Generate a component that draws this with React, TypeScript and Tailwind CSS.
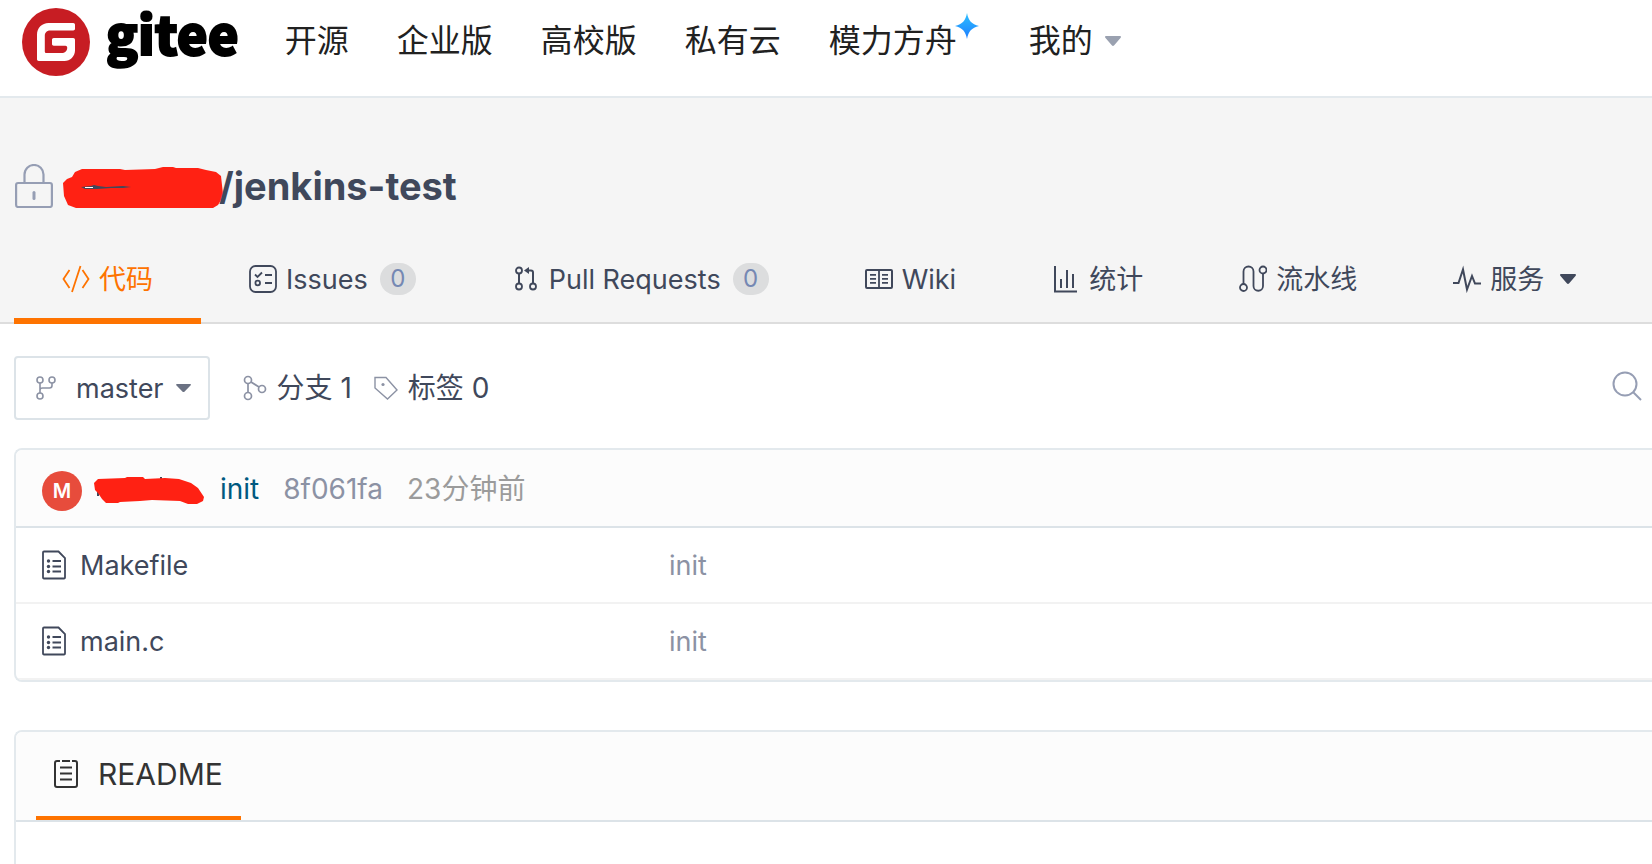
import type { ReactNode } from 'react';

const products = ['开源', '企业版', '高校版', '私有云'];

const files = [
  { name: 'Makefile', message: 'init' },
  { name: 'main.c', message: 'init' },
];

function Caret({ className }: { className: string }) {
  return (
    <svg viewBox="0 0 16 10" preserveAspectRatio="none" className={className} fill="currentColor" aria-hidden="true">
      <path d="M1.2 0h13.6c1 0 1.500.9.9 1.700L9.200 9.300c-.7.9-1.700.9-2.400 0L.3 1.700C-.3.9.2 0 1.200 0z" />
    </svg>
  );
}

function Logo() {
  return (
    <a href="#" aria-label="gitee" className="flex shrink-0 items-start gap-4">
      <svg viewBox="0 0 68 68" className="size-[68px]" aria-hidden="true">
        <circle cx="34" cy="34" r="34" fill="#c71d23" />
        <path
          fill="#fff"
          d="M51.300 15H26.500C20 15 15 20 15 26.500V51.300c0 .9.8 1.700 1.700 1.700H42.500C48.200 53 53 48.200 53 42.500V31.700c0-.9-.8-1.700-1.700-1.700H31.700c-.9 0-1.700.8-1.700 1.700V36c0 .9.8 1.700 1.700 1.700H43.500c.9 0 1.700.8 1.700 1.700v.7c0 2.800-2.300 5-5 5H24.500c-.9 0-1.700-.8-1.700-1.700V27.500c0-2.800 2.300-5 5-5H51.300c.9 0 1.700-.8 1.700-1.700V16.700c0-.9-.8-1.700-1.700-1.700z"
        />
      </svg>
      <span className="font-['Noto_Sans_CJK_SC',sans-serif] text-[52px] leading-[50px] font-black text-black [-webkit-text-stroke:2px_#000]">gitee</span>
    </a>
  );
}

function Spark() {
  return (
    <svg viewBox="0 0 24 24" preserveAspectRatio="none" className="absolute -top-2 left-full -ml-0.5 h-[26px] w-6" aria-hidden="true">
      <defs>
        <linearGradient id="spark" x1="0" y1="0" x2="0" y2="1">
          <stop offset="0" stopColor="#2ec0ff" />
          <stop offset="1" stopColor="#1e7dff" />
        </linearGradient>
      </defs>
      <path fill="url(#spark)" d="M12 0c1.500 7 4.500 10.300 12 12-7.500 1.700-10.500 5-12 12-1.500-7-4.500-10.300-12-12C7.500 10.300 10.500 7 12 0z" />
    </svg>
  );
}

function Lock() {
  return (
    <svg viewBox="0 0 38 44" className="h-11 w-[38px] shrink-0" fill="none" stroke="#969eb4" strokeWidth="2.200" aria-hidden="true">
      <rect x="1.100" y="19" width="35.800" height="24" rx="2" />
      <path d="M9.500 19V10.500a9.500 9.500 0 0 1 19 0V19" />
      <path d="M19 28.500v6" strokeWidth="3" strokeLinecap="round" />
    </svg>
  );
}

function OwnerScribble() {
  return (
    <svg viewBox="0 0 164 44" className="h-11 w-[164px] shrink-0" aria-hidden="true">
      <path fill="#40485b" d="M140 40l4 3h7l5-4z" />
      <path
        fill="#ff2113"
        d="M2 19l4-4 5-2 3-5 7-3h38l5 1 30-1 8-2h10l3 1h22l8 2 10 2 5 4 1 9 1 9-2 6-3 5-5 3H100l-40 1-12 3H20l-5-4-8-3-4-9z"
      />
      <path fill="#40485b" d="M20 23l10-1 3-1 4 1 8 1 17-1 8 1-8 1H50l-14 1H24z" />
      <path fill="#fff" d="M24 23h8v1h-8z" />
    </svg>
  );
}

function AuthorScribble() {
  return (
    <svg viewBox="0 0 110 30" className="h-[30px] w-[110px] shrink-0" aria-hidden="true">
      <path fill="#40485b" d="M3 14h2v6H3zM66 1h2v4h-2zM90 25l6 3h5v-3z" />
      <path
        fill="#ff2113"
        d="M0 7l4-4 27-1 2-1h16l2 2 20-1 14 1 12 4 7 5 4 6 2 3-1 4-6 3h-9l-8-3-28-1-12 1-20 1-2 1H12l-4-4-4-6-3-3z"
      />
    </svg>
  );
}

const lineIcon = {
  fill: 'none',
  stroke: 'currentColor',
  strokeWidth: 2,
  'aria-hidden': true,
} as const;

function CodeIcon() {
  return (
    <svg viewBox="0 0 28 28" className="size-7" {...lineIcon}>
      <path d="M7.500 5L1.500 14l6 9M20.500 5l6 9-6 9M18.500 1L10 27" strokeWidth="1.800" />
    </svg>
  );
}

function IssuesIcon() {
  return (
    <svg viewBox="0 0 28 28" className="size-7" {...lineIcon} strokeWidth={1.800}>
      <rect x="1" y="1" width="26" height="26" rx="5.500" />
      <path d="M6 9.500l2.500 2.500L13 7.500M16 10h7M16 18h7" />
      <circle cx="8.700" cy="18" r="2.300" />
    </svg>
  );
}

function PullIcon() {
  return (
    <svg viewBox="0 0 28 28" className="size-7" {...lineIcon}>
      <circle cx="7" cy="5.500" r="3" strokeWidth="1.800" />
      <circle cx="7" cy="21.500" r="3" strokeWidth="1.800" />
      <circle cx="21" cy="21.500" r="3" strokeWidth="1.800" />
      <path d="M7 8.500v10M21 18.500V7.500q0-2-2-2h-3" />
      <path d="M12 5.500l5-3.500v7z" fill="currentColor" stroke="none" />
    </svg>
  );
}

function WikiIcon() {
  return (
    <svg viewBox="0 0 28 28" className="size-7" {...lineIcon}>
      <rect x="1" y="5" width="26" height="18" rx="1" />
      <path d="M14 6v17M5 9.800h6M5 13.800h6M5 17.800h6M17 9.800h6M17 13.800h6M17 17.800h6" strokeWidth="1.800" />
    </svg>
  );
}

function StatsIcon() {
  return (
    <svg viewBox="0 0 28 28" className="size-7" {...lineIcon}>
      <path d="M3 1v25.500h22M9 14v9M15 5v18M21 9v14" />
    </svg>
  );
}

function PipelineIcon() {
  return (
    <svg viewBox="0 0 28 28" className="size-7" {...lineIcon} strokeWidth={1.800}>
      <circle cx="4.500" cy="22.500" r="3.500" />
      <circle cx="24" cy="5" r="3.500" />
      <path d="M4.500 19V6.500a5 5 0 0 1 10 0V21a4.700 4.700 0 0 0 9.500 0V8.500" />
    </svg>
  );
}

function PulseIcon() {
  return (
    <svg viewBox="0 0 28 28" className="size-7" {...lineIcon}>
      <path d="M0 18h5.500L10 4.500l4 20 5-13.500 3 7.500h6" />
    </svg>
  );
}

function ForkIcon() {
  return (
    <svg viewBox="0 0 20 24" className="h-6 w-5" {...lineIcon} strokeWidth={1.600}>
      <circle cx="4" cy="4" r="3" />
      <circle cx="16" cy="4" r="3" />
      <circle cx="4" cy="20" r="3" />
      <path d="M4 7v10M16 7v2.500q0 2.500-2.500 2.500H6.500Q4 12 4 14" />
    </svg>
  );
}

function BranchesIcon() {
  return (
    <svg viewBox="0 0 24 26" className="h-[26px] w-6" {...lineIcon} strokeWidth={1.700}>
      <circle cx="5" cy="5" r="3.500" />
      <circle cx="5" cy="21" r="3.500" />
      <circle cx="19" cy="14" r="3.500" />
      <path d="M5 8.500v9M8 7l8 5" />
    </svg>
  );
}

function TagIcon() {
  return (
    <svg viewBox="0 0 24 26" className="h-[26px] w-6" {...lineIcon} strokeWidth={1.400}>
      <path d="M1 2.500h11l11 12.500-9.500 9L1 13z" />
      <circle cx="9" cy="9.500" r="1.600" fill="currentColor" stroke="none" />
    </svg>
  );
}

function FileIcon() {
  return (
    <svg viewBox="0 0 24 30" className="h-[30px] w-6 shrink-0" {...lineIcon} strokeWidth={1.800}>
      <path d="M2 1.500h14.500L23 8v19.500q0 1-1 1H2q-1 0-1-1v-25q0-1 1-1z" />
      <path d="M10.500 11h8.500M10.500 16.500h8.500M10.500 21.500h8.500" />
      <g fill="currentColor" stroke="none">
        <circle cx="6.500" cy="11" r="1.700" />
        <circle cx="6.500" cy="16.500" r="1.700" />
        <circle cx="6.500" cy="21.500" r="1.700" />
      </g>
    </svg>
  );
}

function ReadmeIcon() {
  return (
    <svg viewBox="0 0 24 30" className="h-[30px] w-6 shrink-0" {...lineIcon}>
      <path d="M6 2H3Q1 2 1 4v22q0 2 2 2h18q2 0 2-2V4q0-2-2-2h-3M8 2h8" />
      <path d="M6 8.500h12M6 14.500h12M6 20.500h12" />
    </svg>
  );
}

function Tab({ icon, label, count, active, menu }: { icon: ReactNode; label: string; count?: number; active?: boolean; menu?: boolean }) {
  return (
    <a
      href="#"
      aria-current={active ? 'page' : undefined}
      className={
        active
          ? 'flex shrink-0 items-center border-b-6 border-[#fe7300] px-12 pt-2 text-[#fe7300]'
          : 'flex shrink-0 items-center border-b-6 border-transparent px-12 pt-2'
      }
    >
      {icon}
      <span className="ml-[9px] pt-0.5">{label}</span>
      {count !== undefined && (
        <span className="ml-3 flex h-8 min-w-9 items-center justify-center rounded-full bg-[#dcddde] text-2xl text-[#7588b3]">{count}</span>
      )}
      {menu && <Caret className="ml-4 h-[10px] w-4" />}
    </a>
  );
}

export default function App() {
  return (
    <div
      lang="zh-CN"
      className="flex min-h-screen flex-col overflow-x-hidden bg-white font-['Inter','Noto_Sans_CJK_SC',sans-serif] text-[28px] leading-10 text-[#40485b]"
    >
      <header className="flex h-[98px] items-start border-b-2 border-[#e3e9ed] pt-2 pl-[22px]">
        <Logo />
        <nav className="ml-[46px] flex h-[66px] items-center gap-12 text-[32px] whitespace-nowrap text-[#212121]">
          {products.map((name) => (
            <a key={name} href="#">
              {name}
            </a>
          ))}
          <a href="#" className="relative mr-6">
            模力方舟
            <Spark />
          </a>
          <a href="#" className="flex items-center gap-3">
            我的
            <Caret className="h-[10px] w-4 text-[#9aa1b0]" />
          </a>
        </nav>
      </header>

      <section className="border-b-2 border-[#dddddd] bg-[#f5f5f5] pt-16">
        <h1 className="flex h-12 items-center pl-[15px] text-[38px] font-bold whitespace-nowrap">
          <Lock />
          <a href="#" aria-label="owner" className="ml-2">
            <OwnerScribble />
          </a>
          <a href="#" className="-ml-1.5">/jenkins-test</a>
        </h1>
        <nav className="-mb-0.5 mt-[22px] flex h-[92px] pl-3.5 text-[27px] whitespace-nowrap">
          <Tab icon={<CodeIcon />} label="代码" active />
          <Tab icon={<IssuesIcon />} label="Issues" count={0} />
          <Tab icon={<PullIcon />} label="Pull Requests" count={0} />
          <Tab icon={<WikiIcon />} label="Wiki" />
          <Tab icon={<StatsIcon />} label="统计" />
          <Tab icon={<PipelineIcon />} label="流水线" />
          <Tab icon={<PulseIcon />} label="服务" menu />
        </nav>
      </section>

      <main className="flex flex-1 flex-col pl-3.5">
        <div className="mt-8 flex items-center whitespace-nowrap">
          <button type="button" className="flex h-16 items-center rounded border-2 border-[#dce3e8] pr-[17px] pl-5 text-[27px]">
            <span className="text-[#8c92a4]">
              <ForkIcon />
            </span>
            <span className="ml-5 pt-0.5">master</span>
            <Caret className="ml-3 h-2 w-[15px] text-[#6b7283]" />
          </button>
          <a href="#" className="ml-[33px] flex items-center gap-2.5">
            <span className="text-[#8c92a4]">
              <BranchesIcon />
            </span>
            分支 1
          </a>
          <a href="#" className="ml-[22px] flex items-center gap-2.5">
            <span className="text-[#8c92a4]">
              <TagIcon />
            </span>
            标签 0
          </a>
          <button type="button" aria-label="搜索" className="mr-2.5 mb-1 ml-auto text-[#969eb4]">
            <svg viewBox="0 0 30 30" className="size-[30px]" {...lineIcon}>
              <circle cx="13" cy="13" r="11.500" />
              <path d="M21 21l8 8" />
            </svg>
          </button>
        </div>

        <section className="mt-7 overflow-hidden rounded-l-lg border-y-2 border-l-2 border-[#e3e9ed]">
          <div className="flex h-[78px] items-center border-b-2 border-[#dce3e8] bg-[#fcfcfc] pt-0.5 pl-[26px] whitespace-nowrap">
            <span className="mt-1 flex size-10 items-center justify-center rounded-full bg-[#e74c3c] text-xl font-semibold text-white">M</span>
            <a href="#" aria-label="author" className="mt-1 ml-3">
              <AuthorScribble />
            </a>
            <a href="#" className="ml-4 text-[#005980]">init</a>
            <a href="#" className="ml-6 text-[#8c92a4]">8f061fa</a>
            <span className="ml-6 text-[#9b9b9b]">23分钟前</span>
          </div>
          <table className="w-full table-fixed border-separate border-spacing-0 text-left text-[27px]">
            <tbody>
              {files.map((file) => (
                <tr key={file.name} className="h-19">
                  <td className="w-[653px] border-b-2 border-[#f2f2f2] p-0 pl-[26px]">
                    <a href="#" className="flex items-center gap-3.5">
                      <FileIcon />
                      <span className="pt-0.5">{file.name}</span>
                    </a>
                  </td>
                  <td className="border-b-2 border-[#f2f2f2] p-0 pt-0.5 text-[#8c92a4]">
                    <a href="#">{file.message}</a>
                  </td>
                </tr>
              ))}
            </tbody>
          </table>
        </section>

        <section className="mt-12 flex flex-1 flex-col overflow-hidden rounded-tl-lg border-t-2 border-l-2 border-[#e3e9ed]">
          <div className="flex h-[90px] border-b-2 border-[#dce3e8] bg-[#fcfcfc] pl-5 text-[#333333]">
            <h2 className="flex items-center gap-5 border-b-4 border-[#fe7300] px-[18px] text-[30px]">
              <ReadmeIcon />
              README
            </h2>
          </div>
        </section>
      </main>
    </div>
  );
}
